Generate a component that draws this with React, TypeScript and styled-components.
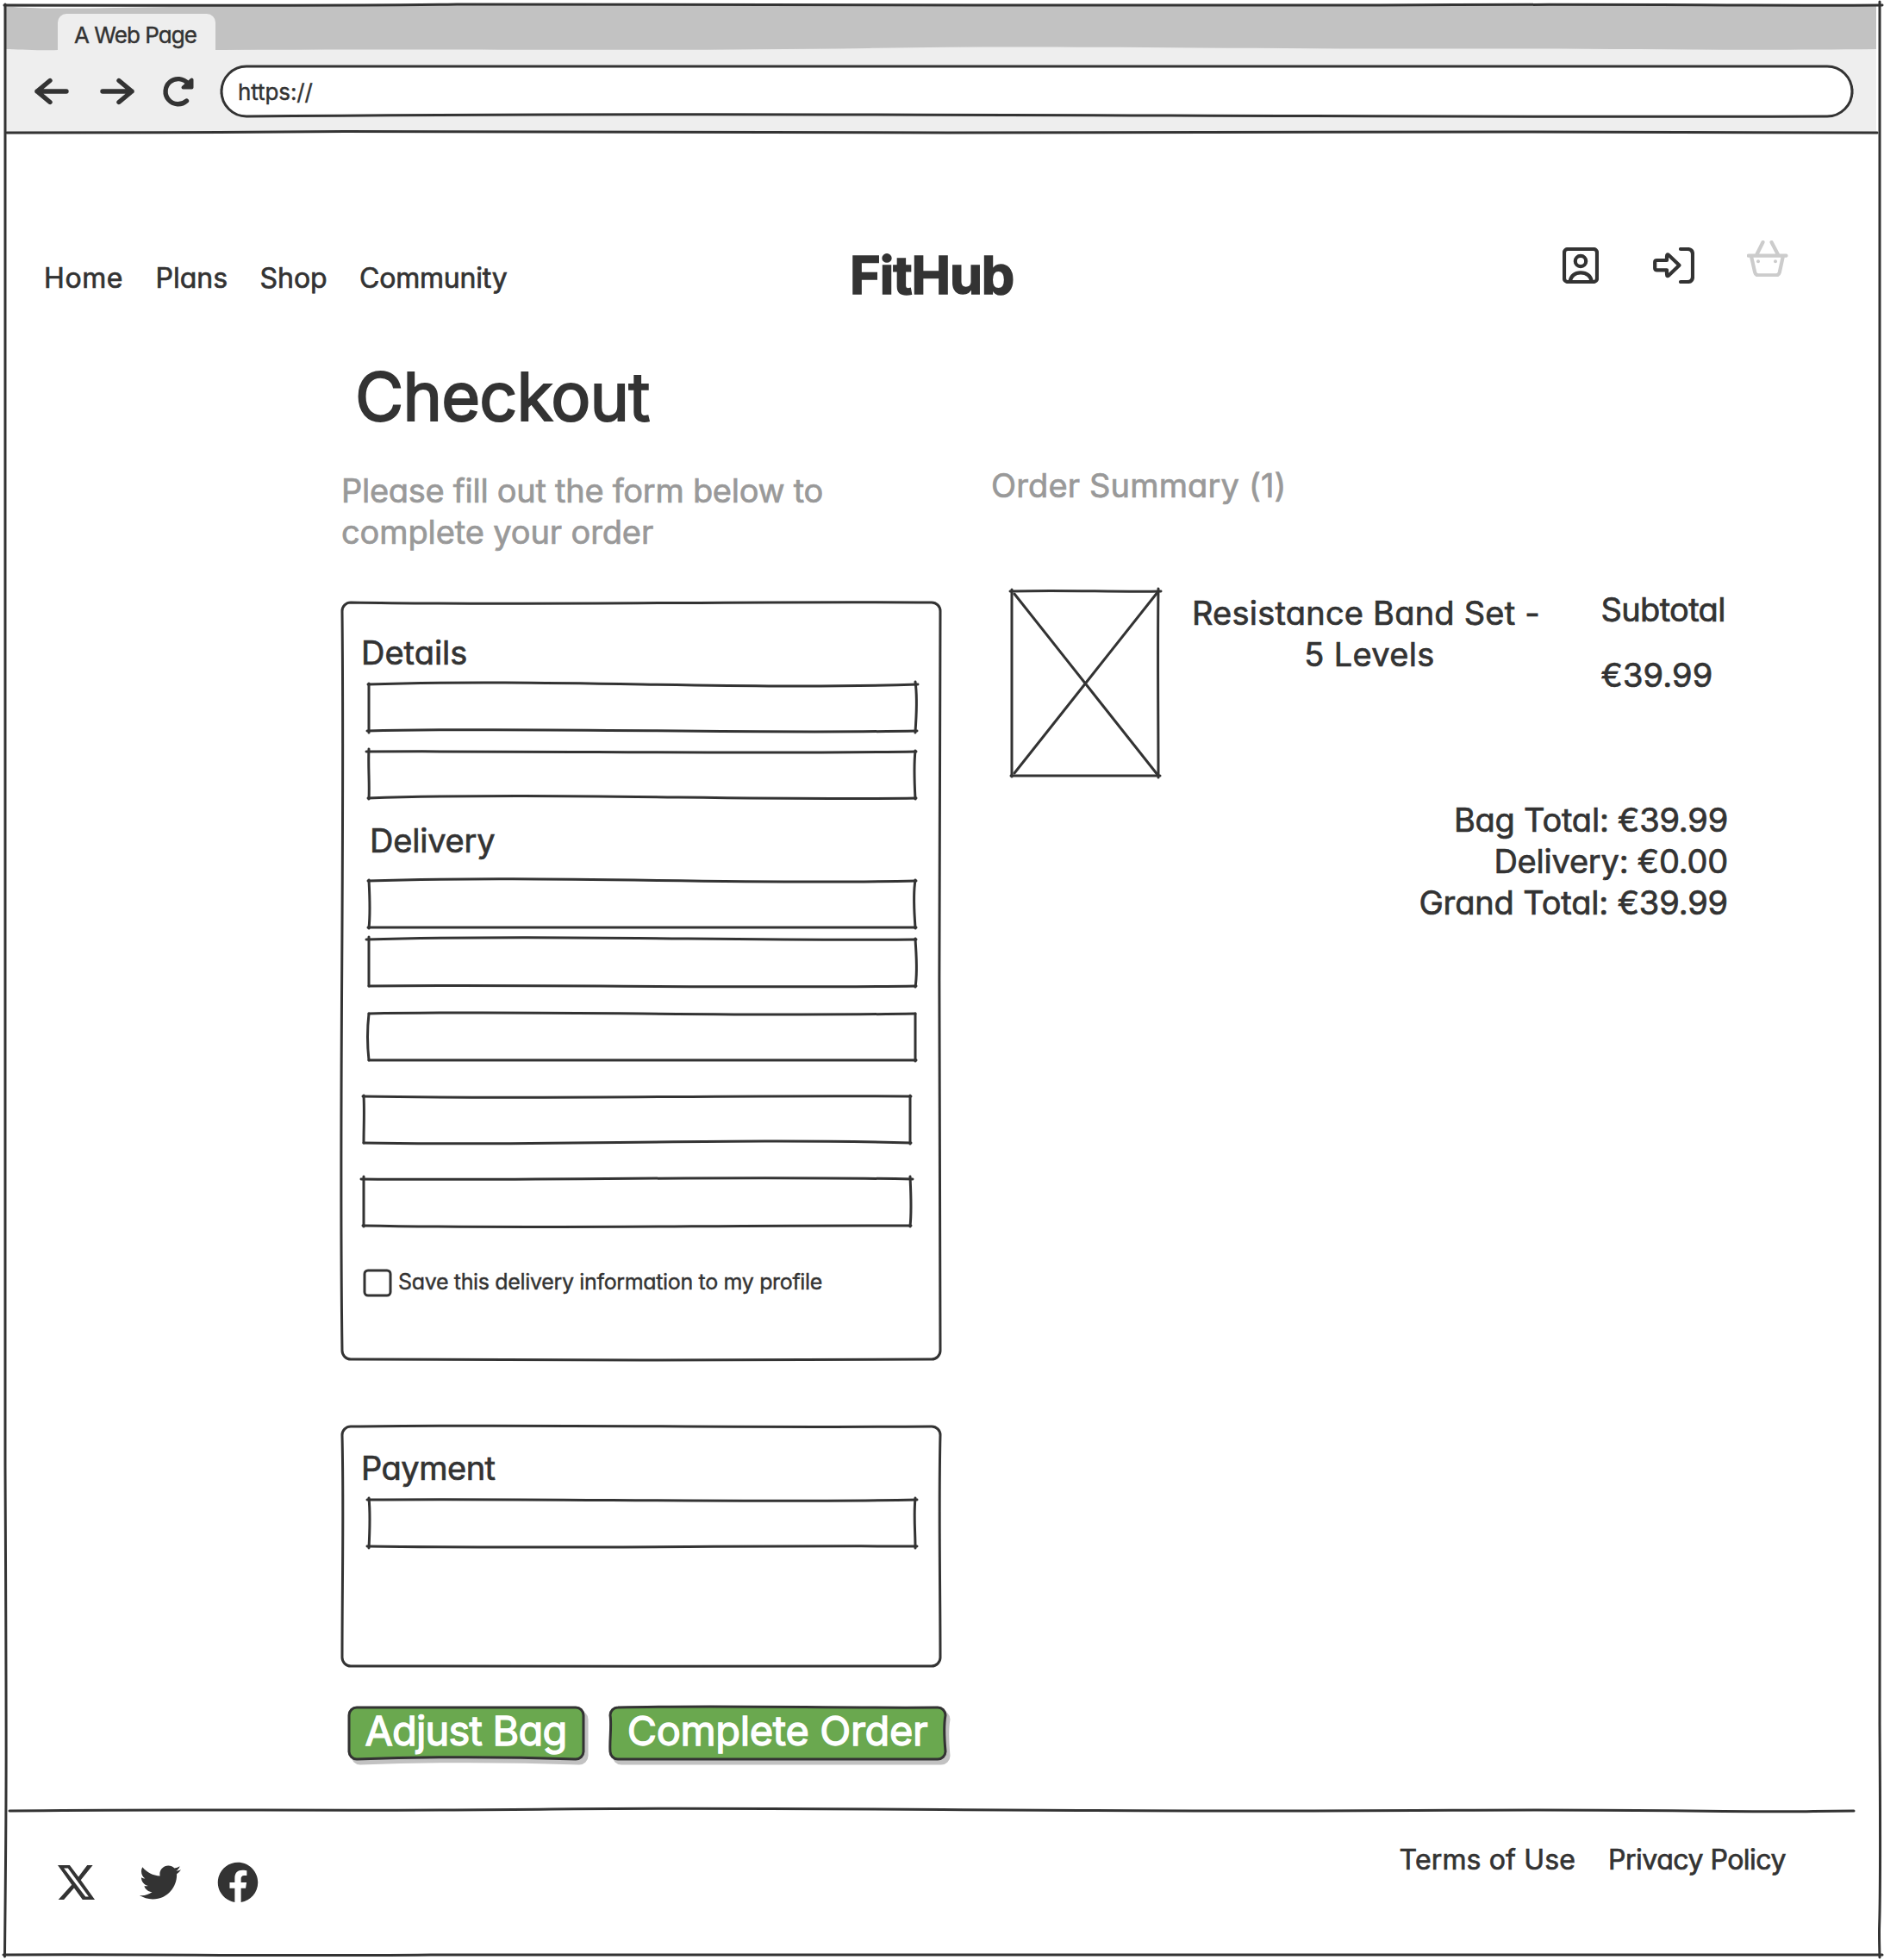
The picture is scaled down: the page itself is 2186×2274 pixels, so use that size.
import React from "react";
import styled, { createGlobalStyle } from "styled-components";
import { FaFacebook, FaTwitter } from "react-icons/fa";

const ink = "#333333";
const muted = "#999999";
const green = "#6aa84f";

const GlobalStyle = createGlobalStyle`
  * { box-sizing: border-box; }
  body {
    margin: 0;
    background: #ffffff;
    color: ${ink};
    font-family: Inter, "Liberation Sans", sans-serif;
    font-feature-settings: "cv11" 1;
  }
`;

/* ---------- hand-drawn outlines ---------- */

const Overlay = styled.svg`
  position: absolute;
  top: 0;
  left: 0;
  overflow: visible;
  pointer-events: none;
  fill: none;
  stroke: ${ink};
  stroke-width: 3;
  stroke-linecap: round;
  stroke-linejoin: round;
`;

type Bend = [number, number];
type Bends = { top?: Bend; right?: Bend; bottom?: Bend; left?: Bend };

type OutlineProps = {
  w: number;
  h: number;
  bends?: Bends;
  /* how far the strokes run past each corner: tl, tr, br, bl */
  over?: [number, number, number, number];
  cross?: boolean;
};

const flat: Bend = [0, 0];

function Outline({ w, h, bends = {}, over = [1, 2, 2, 1], cross }: OutlineProps) {
  const { top = flat, right = flat, bottom = flat, left = flat } = bends;
  const [tl, tr, br, bl] = over;
  return (
    <Overlay width={w} height={h} aria-hidden>
      <path d={`M${-tl} 0C${w / 3} ${top[0]} ${(2 * w) / 3} ${top[1]} ${w + tr} 0`} />
      <path d={`M${-bl} ${h}C${w / 3} ${h + bottom[0]} ${(2 * w) / 3} ${h + bottom[1]} ${w + br} ${h}`} />
      <path d={`M0 ${-tl}C${left[0]} ${h / 3} ${left[1]} ${(2 * h) / 3} 0 ${h + bl}`} />
      <path d={`M${w} ${-tr}C${w + right[0]} ${h / 3} ${w + right[1]} ${(2 * h) / 3} ${w} ${h + br}`} />
      {cross && <path d={`M3 3L${w} ${h}M${w} 0L3 ${h - 3}`} />}
    </Overlay>
  );
}

type RoundProps = { w: number; h: number; r: number; bends?: Bends; fill?: string; shadow?: boolean };

function RoundOutline({ w, h, r, bends = {}, fill = "none", shadow }: RoundProps) {
  const { top = flat, right = flat, bottom = flat, left = flat } = bends;
  const d =
    `M${r} 0C${w / 3} ${top[0]} ${(2 * w) / 3} ${top[1]} ${w - r} 0A${r} ${r} 0 0 1 ${w} ${r}` +
    `C${w + right[0]} ${h / 3} ${w + right[1]} ${(2 * h) / 3} ${w} ${h - r}A${r} ${r} 0 0 1 ${w - r} ${h}` +
    `C${(2 * w) / 3} ${h + bottom[1]} ${w / 3} ${h + bottom[0]} ${r} ${h}A${r} ${r} 0 0 1 0 ${h - r}` +
    `C${left[1]} ${(2 * h) / 3} ${left[0]} ${h / 3} 0 ${r}A${r} ${r} 0 0 1 ${r} 0Z`;
  return (
    <Overlay width={w} height={h} aria-hidden>
      {shadow && <path d={d} transform="translate(4 5)" fill="#c2c2c2" stroke="#c2c2c2" />}
      <path d={d} fill={fill} />
    </Overlay>
  );
}

/* ---------- browser window ---------- */

const Window = styled.div`
  position: relative;
  display: flex;
  flex-direction: column;
  width: 2186px;
  height: 2274px;
  overflow: hidden;
`;

const Chrome = styled.header`
  position: relative;
  height: 154px;
  margin: 0 9px 0 7px;
  display: flex;
  flex-direction: column;
`;

const ChromeFill = styled.svg`
  position: absolute;
  inset: 0;
`;

const TabStrip = styled.div`
  position: relative;
  height: 60px;
  padding: 16px 0 0 60px;
`;

const Tab = styled.div`
  width: 183px;
  height: 44px;
  padding: 10px 0 0 19px;
  border-radius: 10px 10px 0 0;
  background: #eeeeee;
`;

const Toolbar = styled.div`
  position: relative;
  display: flex;
  align-items: flex-start;
  padding: 17px 0 0 33px;
`;

const ToolIcon = styled.svg<{ $gap: number }>`
  flex: none;
  width: 40px;
  height: 40px;
  margin: 9px ${(p) => p.$gap}px 0 0;
  fill: none;
  stroke: ${ink};
  stroke-width: 5.4;
  stroke-linecap: round;
  stroke-linejoin: round;
`;

const AddressBar = styled.div`
  position: relative;
  width: 1892px;
  height: 58px;
  padding: 15px 0 0 19px;
`;

const Text = styled.span<{ $size: number; $line: number; $track?: number; $tone?: string; $heavy?: number }>`
  position: relative;
  display: block;
  white-space: nowrap;
  font-size: ${(p) => p.$size}px;
  line-height: ${(p) => p.$line}px;
  letter-spacing: ${(p) => p.$track ?? 0}px;
  color: ${(p) => p.$tone ?? ink};
  -webkit-text-stroke: ${(p) => p.$heavy ?? 0.7}px ${(p) => p.$tone ?? ink};
  stroke-linejoin: round;
`;

/* ---------- site header ---------- */

const SiteHeader = styled.div`
  display: flex;
  align-items: flex-start;
  height: 246px;
  padding-left: 51px;
`;

const Nav = styled.nav`
  display: flex;
  gap: 37.4px;
  width: 935px;
  padding-top: 149px;
`;

const Brand = styled.h1`
  width: 827px;
  margin: 0;
  padding-top: 129px;
  font-weight: 700;
`;

const HeaderIcons = styled.div`
  display: flex;
  align-items: flex-start;
  padding-top: 125px;
`;

const LineIcon = styled.svg<{ $w: number; $drop?: number; $after?: number; $tone?: string }>`
  flex: none;
  width: ${(p) => p.$w}px;
  height: 42px;
  margin: ${(p) => p.$drop ?? 0}px ${(p) => p.$after ?? 0}px 0 0;
  fill: none;
  stroke: ${(p) => p.$tone ?? ink};
  stroke-width: 4.2;
  stroke-linecap: round;
  stroke-linejoin: round;
`;

/* ---------- checkout ---------- */

const Main = styled.main`
  display: flex;
  height: 1700px;
  padding-left: 397px;
`;

const FormColumn = styled.section`
  width: 753px;
`;

const Title = styled.h2`
  margin: 15px 0 0 15px;
  font-weight: 400;
`;

const Lead = styled.p`
  margin: 40px 0 0 -1px;
`;

const Card = styled.div<{ $h: number; $top: number; $pad: number }>`
  position: relative;
  width: 694px;
  height: ${(p) => p.$h}px;
  margin-top: ${(p) => p.$top}px;
  padding: ${(p) => p.$pad}px 0 0 21px;
`;

const Legend = styled.div<{ $top?: number; $indent?: number }>`
  padding: ${(p) => p.$top ?? 0}px 0 0 ${(p) => p.$indent ?? 1}px;
`;

const Field = styled.div<{ $top: number; $indent?: number }>`
  position: relative;
  width: 634px;
  height: 54px;
  margin: ${(p) => p.$top}px 0 0 ${(p) => p.$indent ?? 10}px;
`;

const SaveRow = styled.label`
  display: flex;
  gap: 9px;
  margin: 52px 0 0 5px;
`;

const Checkbox = styled.span`
  position: relative;
  width: 30px;
  height: 29px;
`;

const SaveText = styled.span`
  margin-top: -2px;
`;

const Actions = styled.div`
  display: flex;
  gap: 31px;
  margin: 48px 0 0 8px;
`;

const Button = styled.button<{ $w: number }>`
  position: relative;
  display: flex;
  align-items: center;
  justify-content: center;
  width: ${(p) => p.$w}px;
  height: 60px;
  padding: 0 1px 7px 0;
  border: 0;
  background: none;
  font: inherit;
  font-feature-settings: inherit;
`;

const SummaryColumn = styled.section`
  width: 855px;
  padding-top: 139px;
`;

const SummaryRow = styled.div`
  display: flex;
  align-items: flex-start;
  margin: 99px 0 0 24px;
`;

const Thumb = styled.div`
  position: relative;
  width: 170px;
  height: 214px;
`;

const ProductName = styled.div`
  display: flex;
  flex-direction: column;
  align-items: center;
  width: 405px;
  margin: 1px 70px 0 38.5px;

  span + span {
    padding-left: 8px;
  }
`;

const Amounts = styled.div`
  display: flex;
  flex-direction: column;
  gap: 28px;
  margin-top: -3px;
`;

const Totals = styled.div`
  display: flex;
  flex-direction: column;
  align-items: flex-end;
  margin-top: 27px;
`;

/* ---------- footer ---------- */

const Footer = styled.footer`
  position: relative;
  display: flex;
  justify-content: space-between;
  align-items: flex-start;
  height: 174px;
  padding: 0 114px 0 67px;
`;

const Social = styled.div`
  display: flex;
  align-items: center;
  padding-top: 60px;
  color: ${ink};
`;

const XMark = styled.svg`
  width: 43px;
  height: 40px;
  margin-right: 52px;
  fill: ${ink};
`;

const Bird = styled(FaTwitter)`
  width: 48px;
  height: 48px;
  margin-right: 42px;
`;

const Face = styled(FaFacebook)`
  width: 48px;
  height: 48px;
`;

const Legal = styled.div`
  display: flex;
  gap: 38px;
  padding-top: 38px;
`;

type Box = { top: number; indent?: number; bends: Bends; over: [number, number, number, number] };

const detailFields: Box[] = [
  { top: 13, bends: { top: [-7, 7], bottom: [-5, 4], right: [3, 1] }, over: [1, 3, 2, 2] },
  { top: 24, bends: { top: [-1, 3], bottom: [-7, 3], left: [-1, 1], right: [-2, -1] }, over: [3, 1, 1, 1] },
];

const deliveryFields: Box[] = [
  { top: 23, bends: { top: [-7, 5], bottom: [0, 0], left: [1, 2], right: [-3, -1] }, over: [1, 1, 1, 1] },
  { top: 14, bends: { top: [-6, 2], bottom: [-2, 3], right: [1, 3] }, over: [3, 1, 1, 0] },
  { top: 32, bends: { top: [-4, 4], bottom: [-1, 1], left: [-2, -2] }, over: [0, 0, 1, 0] },
  { top: 42, indent: 4, bends: { top: [4, -2], bottom: [4, -6], left: [1, 0], right: [0, 0] }, over: [1, 1, 1, 0] },
  { top: 42, indent: 4, bends: { top: [2, -4], bottom: [4, -1], right: [1, 2] }, over: [3, 3, 1, 1] },
];

function Fields({ items }: { items: Box[] }) {
  return (
    <>
      {items.map((f, i) => (
        <Field key={i} $top={f.top} $indent={f.indent}>
          <Outline w={634} h={54} bends={f.bends} over={f.over} />
        </Field>
      ))}
    </>
  );
}

export default function App() {
  return (
    <>
      <GlobalStyle />
      <Window>
        <Chrome>
          <ChromeFill width="2170" height="154" aria-hidden>
            <path d="M0 6H2170V154H0Z" fill="#eeeeee" />
            <path
              d="M0 6H2171V57C1980 59 1850 56 1700 56.500C1400 57 1200 52 1000 56C700 60 500 56 250 58H60C30 59 15 57 0 57Z"
              fill="#c2c2c2"
            />
            <path d="M8 8C50 11 120 9 190 8Z" fill="#ffffff" />
          </ChromeFill>
          <TabStrip>
            <Tab>
              <Text $size={26} $line={30} $track={-0.95} $heavy={0.4}>A Web Page</Text>
            </Tab>
          </TabStrip>
          <Toolbar>
            <ToolIcon $gap={36} viewBox="0 0 40 40">
              <path d="M37 20H3M18 7.500L3 20L18 32.500" />
            </ToolIcon>
            <ToolIcon $gap={32} viewBox="0 0 40 40">
              <path d="M3 20H37M22 7.500L37 20L22 32.500" />
            </ToolIcon>
            <ToolIcon $gap={29} viewBox="0 0 40 40">
              <path d="M28.500 31A14.600 14.600 0 1 1 30 11" />
              <path d="M34.500 6.500V15.500H24.500Z" fill="#333333" strokeWidth="4" />
            </ToolIcon>
            <AddressBar>
              <RoundOutline w={1892} h={58} r={29} fill="#ffffff" bends={{ top: [-3, 3], bottom: [-6, 2] }} />
              <Text $size={26} $line={30} $track={-0.1} $heavy={0.4}>https://</Text>
            </AddressBar>
          </Toolbar>
        </Chrome>

        <SiteHeader>
          <Nav>
            <Text $size={32} $line={40} $track={0.6}>Home</Text>
            <Text $size={32} $line={40} $track={0}>Plans</Text>
            <Text $size={32} $line={40} $track={0}>Shop</Text>
            <Text $size={32} $line={40} $track={-0.2}>Community</Text>
          </Nav>
          <Brand>
            <Text $size={61} $line={72} $track={-1.1} $heavy={1.5}>FitHub</Text>
          </Brand>
          <HeaderIcons>
            <LineIcon $w={42} $drop={8} $after={63} viewBox="0 0 42 42">
              <rect x="2" y="2" width="38" height="38" rx="4" />
              <circle cx="21" cy="16" r="6.200" />
              <path d="M8.500 39.500C10 33 14 29.300 21 29.300S32.500 33 34 39.500" />
            </LineIcon>
            <LineIcon $w={48} $drop={8} $after={61} viewBox="0 0 48 42">
              <path d="M32 2H40Q46 2 46 8V34Q46 40 40 40H32" />
              <path d="M4.500 15H16V10.500Q16 7 18.500 9.300L30.500 20.700L18.500 32.200Q16 34.500 16 31V26.300H4.500Q2.200 26.300 2.200 24.300V17Q2.200 15 4.500 15Z" />
            </LineIcon>
            <LineIcon $w={48} $tone="#cccccc" viewBox="0 0 48 42">
              <path d="M18.500 2L11.500 16M28.500 2L35.800 16M1.800 17.700H45.500M5 18.500L9.200 37Q10 40.300 13 40.300H34Q37 40.300 37.800 37L41.800 18.500" />
              <circle cx="13" cy="24.300" r="2" fill="#cccccc" stroke="none" />
              <circle cx="33" cy="24.300" r="2" fill="#cccccc" stroke="none" />
            </LineIcon>
          </HeaderIcons>
        </SiteHeader>

        <Main>
          <FormColumn>
            <Title>
              <Text $size={77} $line={90} $track={-0.8} $heavy={2}>Checkout</Text>
            </Title>
            <Lead>
              <Text $size={38} $line={48} $track={-0.28} $tone={muted}>Please fill out the form below to</Text>
              <Text $size={38} $line={48} $track={-0.12} $tone={muted}>complete your order</Text>
            </Lead>

            <Card $h={878} $top={58} $pad={34}>
              <RoundOutline w={694} h={878} r={10} bends={{ top: [4, -2], right: [-1, -2], bottom: [2, 1], left: [3, -4] }} />
              <Legend>
                <Text $size={38} $line={48} $track={0}>Details</Text>
              </Legend>
              <Fields items={detailFields} />
              <Legend $top={25} $indent={11}>
                <Text $size={38} $line={48} $track={-0.2}>Delivery</Text>
              </Legend>
              <Fields items={deliveryFields} />
              <SaveRow>
                <Checkbox>
                  <RoundOutline w={30} h={29} r={4} />
                </Checkbox>
                <SaveText>
                  <Text $size={25} $line={30} $track={-0.34} $heavy={0.4}>Save this delivery information to my profile</Text>
                </SaveText>
              </SaveRow>
            </Card>

            <Card $h={278} $top={78} $pad={24}>
              <RoundOutline w={694} h={278} r={10} bends={{ top: [-3, 2], right: [-2, 0], bottom: [-1, 2], left: [2, 0] }} />
              <Legend>
                <Text $size={38} $line={48} $track={-0.5}>Payment</Text>
              </Legend>
              <Field $top={13}>
                <Outline w={634} h={54} bends={{ top: [-2, 4], bottom: [3, -1], left: [2, 1], right: [-2, 0] }} over={[2, 2, 2, 2]} />
              </Field>
            </Card>

            <Actions>
              <Button $w={272} type="button">
                <RoundOutline w={272} h={60} r={9} fill={green} shadow bends={{ bottom: [-3, -3] }} />
                <Text $size={47} $line={52} $track={-0.8} $tone="#ffffff" $heavy={1.3}>Adjust Bag</Text>
              </Button>
              <Button $w={389} type="button">
                <RoundOutline w={389} h={60} r={9} fill={green} shadow bends={{ top: [-3, 1], right: [-2, -1], left: [2, -1] }} />
                <Text $size={47} $line={52} $track={-0.35} $tone="#ffffff" $heavy={1.3}>Complete Order</Text>
              </Button>
            </Actions>
          </FormColumn>

          <SummaryColumn>
            <Text $size={38} $line={48} $track={0.15} $tone={muted}>Order Summary (1)</Text>
            <SummaryRow>
              <Thumb>
                <Outline w={170} h={214} cross over={[2, 3, 2, 1]} bends={{ top: [-2, 1], right: [-1, 0] }} />
              </Thumb>
              <ProductName>
                <Text $size={38} $line={48} $track={0.22}>Resistance Band Set -</Text>
                <Text $size={38} $line={48} $track={0.33}>5 Levels</Text>
              </ProductName>
              <Amounts>
                <Text $size={38} $line={48} $track={-0.65}>Subtotal</Text>
                <Text $size={38} $line={48} $track={0.1}>€39.99</Text>
              </Amounts>
            </SummaryRow>
            <Totals>
              <Text $size={38} $line={48} $track={-0.22}>Bag Total: €39.99</Text>
              <Text $size={38} $line={48} $track={-0.22}>Delivery: €0.00</Text>
              <Text $size={38} $line={48} $track={-0.15}>Grand Total: €39.99</Text>
            </Totals>
          </SummaryColumn>
        </Main>

        <Footer>
          <Overlay width="2186" height="4" aria-hidden>
            <path d="M11 1C200 -2 400 2 640 -1S1200 2 1500 1S1800 -1 1960 1S2080 1 2151 1" />
          </Overlay>
          <Social>
            <XMark viewBox="0 0 127 118" aria-label="X">
              <path
                fillRule="evenodd"
                d="M0 0H41L71 40L101 0H120L79 51L127 118H85L56 78L21 118H2L48 67ZM21 10L95 108H106L35 10Z"
              />
            </XMark>
            <Bird />
            <Face />
          </Social>
          <Legal>
            <Text $size={32} $line={40} $track={0.15}>Terms of Use</Text>
            <Text $size={32} $line={40} $track={-0.5}>Privacy Policy</Text>
          </Legal>
        </Footer>

        <Overlay width="2186" height="2274" aria-hidden>
          <path d="M5 6C200 6 400 7 530 5S1300 8 1600 6S2000 7 2184 6" />
          <path d="M8 154C150 154 250 154 400 152.500S800 155 1100 154S1600 152 1750 153S2050 155 2178 154" />
          <path d="M6 5C4 200 7 400 6 700S4 1300 6 1700S7 2100 5.500 2270" />
          <path d="M2181 2C2182 200 2179 400 2181 800S2179 1700 2181 2000S2179 2200 2181 2271" />
          <path d="M4 2268C200 2267 300 2270 500 2268S1000 2270 1400 2268S2000 2269 2184 2268" />
        </Overlay>
      </Window>
    </>
  );
}
